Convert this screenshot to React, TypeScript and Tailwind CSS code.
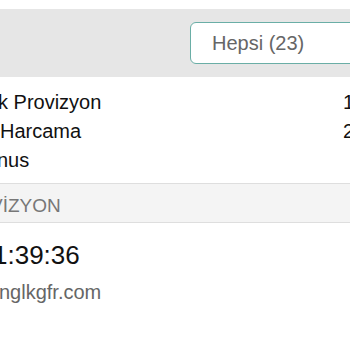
import React from 'react';

const rows = [
    { label: 'k Provizyon', value: '1', shift: '-ml-[2px]' },
    { label: 'Harcama', value: '2', shift: 'ml-0' },
    { label: 'nus', value: '', shift: '-ml-[3px]' },
];

export default function App() {
    return (
        <div
            className="w-[350px] h-[350px] overflow-hidden bg-white pt-[9px]"
            style={{ fontFamily: '"Liberation Sans", Arial, sans-serif' }}
        >
            {/* Filter bar */}
            <div className="h-[68px] bg-[#e6e6e6] flex items-center pl-[190px]">
                <div className="shrink-0 w-[200px] h-[42px] bg-white border border-[#6aaea6] rounded-[6px] flex items-center pl-[21px] text-[20px] text-[#666]">
                    Hepsi (23)
                </div>
            </div>

            {/* Summary rows */}
            <div className="pt-[11px] pb-[8px]">
                {rows.map(r => (
                    <div key={r.label} className="grid grid-cols-[343px_auto] text-[20px] leading-[29px] text-[#111] whitespace-nowrap">
                        <span className={r.shift}>{r.label}</span>
                        <span>{r.value}</span>
                    </div>
                ))}
            </div>

            {/* Section header */}
            <div className="h-[40px] bg-[#f4f4f4] border-y border-[#dedede] pt-[12px] text-[19px] leading-[20px] text-[#777] whitespace-nowrap">
                <span className="-ml-[10px]">VİZYON</span>
            </div>

            {/* Detail */}
            <div className="mt-[17px] text-[26px] leading-[30px] text-[#111] whitespace-nowrap">
                <span className="-ml-[7px] inline-block">1:39:36</span>
            </div>
            <div className="mt-[10px] text-[20px] leading-[24px] text-[#666] whitespace-nowrap">
                <span className="-ml-[1px] inline-block">nglkgfr.com</span>
            </div>
        </div>
    );
}
